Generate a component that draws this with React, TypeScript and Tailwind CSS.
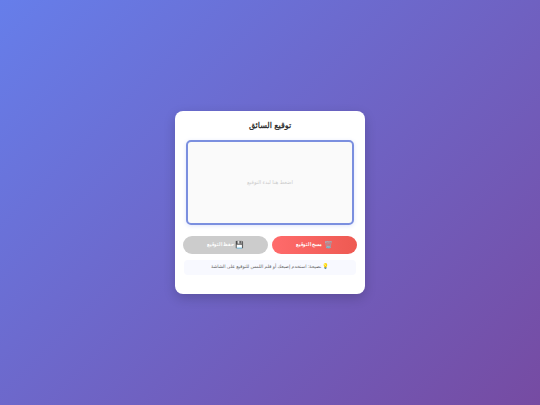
export default function App() {
  return (
    <div
      dir="rtl"
      lang="ar"
      className="flex min-h-screen items-center justify-center bg-[linear-gradient(135deg,#667eea_0%,#764ba2_100%)] font-['Liberation_Sans',sans-serif] [text-rendering:geometricPrecision]"
    >
      <div className="h-[183px] w-[190px] rounded-[8px] bg-white px-2 pt-[8px] shadow-[0_4px_12px_rgba(0,0,0,0.18)]">
        <h1 className="text-center text-[8px] leading-[14px] font-bold text-[#333333]">توقيع السائق</h1>
        <div className="mx-auto mt-[7px] flex h-[85px] w-[168px] items-center justify-center rounded-[5px] border-2 border-[#7b8fdf] bg-[#fafafa] pt-[2px] shadow-[0_1px_4px_rgba(102,126,234,0.2)]">
          <span className="text-[5.2px] text-[#cccccc]">اضغط هنا لبدء التوقيع</span>
        </div>
        <div className="mt-[11px] flex gap-1">
          <button className="flex h-[18px] flex-1 items-center justify-center gap-[1.5px] rounded-[10px] bg-gradient-to-r from-[#ff6b6b] to-[#ee5a52] text-[5.2px] font-bold text-white">
            <span className="text-[7px]">🗑️</span>
            مسح التوقيع
          </button>
          <button className="flex h-[18px] flex-1 items-center justify-center gap-[1.5px] rounded-[10px] bg-[#cccccc] text-[5.2px] font-bold text-white">
            <span className="text-[7px]">💾</span>
            حفظ التوقيع
          </button>
        </div>
        <div className="mx-[1px] mt-[6px] flex h-[15px] items-center justify-center gap-[1px] rounded-[4px] bg-[#f8f9ff] text-[4.65px] text-[#666666]">
          <span className="text-[5.5px]">💡</span>
          نصيحة: استخدم إصبعك أو قلم اللمس للتوقيع على الشاشة
        </div>
      </div>
    </div>
  );
}
